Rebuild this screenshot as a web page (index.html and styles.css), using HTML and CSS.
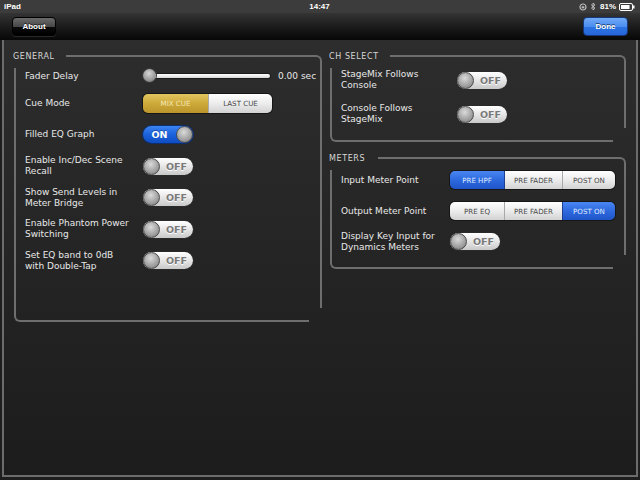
FILE: index.html
```html
<!DOCTYPE html>
<html>
<head>
<meta charset="utf-8">
<link rel="stylesheet" href="styles.css">
</head>
<body>
<div class="screen">
  <div class="status">
    <span class="st-left">iPad</span>
    <span class="st-time">14:47</span>
    <span class="st-right">
      <svg class="ico" width="8" height="8" viewBox="0 0 8 8"><circle cx="4" cy="4" r="3" fill="none" stroke="#bbb" stroke-width="1.2"/><rect x="2.7" y="3.3" width="2.6" height="2" fill="#bbb"/></svg>
      <svg class="ico" width="6" height="9" viewBox="0 0 6 9"><path d="M1 2.5 L5 6.2 L3 8 V1 L5 2.8 L1 6.5" fill="none" stroke="#bbb" stroke-width="1"/></svg>
      <span class="pct">81%</span>
      <svg class="ico" width="16" height="8" viewBox="0 0 16 8"><rect x="0.5" y="0.5" width="13" height="7" rx="1.5" fill="none" stroke="#fff" stroke-width="1"/><rect x="2" y="2" width="8.5" height="4" fill="#fff"/><rect x="14" y="2.5" width="1.5" height="3" fill="#fff"/></svg>
    </span>
  </div>
  <div class="toolbar">
    <button class="btn btn-about">About</button>
    <button class="btn btn-done">Done</button>
  </div>
  <div class="frame">
    <div class="col col-left">
      <section class="group group-general">
        <div class="group-head">GENERAL</div>
        <div class="group-body">
          <div class="row">
            <span class="label">Fader Delay</span>
            <div class="slider"><div class="track"><span class="thumb"></span></div></div>
            <span class="value">0.00 sec</span>
          </div>
          <div class="row row-cue">
            <span class="label">Cue Mode</span>
            <div class="seg seg-cue"><span class="seg-item gold">MIX CUE</span><span class="seg-item">LAST CUE</span></div>
          </div>
          <div class="row">
            <span class="label">Filled EQ Graph</span>
            <span class="switch on"><span class="sw-text">ON</span><span class="knob"></span></span>
          </div>
          <div class="row">
            <span class="label">Enable Inc/Dec Scene<br>Recall</span>
            <span class="switch off"><span class="knob"></span><span class="sw-text">OFF</span></span>
          </div>
          <div class="row">
            <span class="label">Show Send Levels in<br>Meter Bridge</span>
            <span class="switch off"><span class="knob"></span><span class="sw-text">OFF</span></span>
          </div>
          <div class="row">
            <span class="label">Enable Phantom Power<br>Switching</span>
            <span class="switch off"><span class="knob"></span><span class="sw-text">OFF</span></span>
          </div>
          <div class="row">
            <span class="label">Set EQ band to 0dB<br>with Double-Tap</span>
            <span class="switch off"><span class="knob"></span><span class="sw-text">OFF</span></span>
          </div>
        </div>
      </section>
    </div>
    <div class="col col-right">
      <section class="group group-ch">
        <div class="group-head">CH SELECT</div>
        <div class="group-body">
          <div class="row">
            <span class="label">StageMix Follows<br>Console</span>
            <span class="switch off"><span class="knob"></span><span class="sw-text">OFF</span></span>
          </div>
          <div class="row">
            <span class="label">Console Follows<br>StageMix</span>
            <span class="switch off"><span class="knob"></span><span class="sw-text">OFF</span></span>
          </div>
        </div>
      </section>
      <section class="group group-meters">
        <div class="group-head">METERS</div>
        <div class="group-body">
          <div class="row">
            <span class="label">Input Meter Point</span>
            <div class="seg seg-meter"><span class="seg-item blue s1">PRE HPF</span><span class="seg-item s2">PRE FADER</span><span class="seg-item s3">POST ON</span></div>
          </div>
          <div class="row">
            <span class="label">Output Meter Point</span>
            <div class="seg seg-meter"><span class="seg-item s1">PRE EQ</span><span class="seg-item s2">PRE FADER</span><span class="seg-item blue s3">POST ON</span></div>
          </div>
          <div class="row">
            <span class="label">Display Key Input for<br>Dynamics Meters</span>
            <span class="switch off"><span class="knob"></span><span class="sw-text">OFF</span></span>
          </div>
        </div>
      </section>
    </div>
  </div>
</div>
</body>
</html>
```
FILE: styles.css
```css
html, body {
  margin: 0;
  padding: 0;
}
body {
  width: 640px;
  height: 480px;
  overflow: hidden;
  background: #1e1e1e;
  font-family: "DejaVu Sans", sans-serif;
}
.screen {
  width: 640px;
  height: 480px;
  display: flex;
  flex-direction: column;
}

/* status bar */
.status {
  height: 13px;
  background: #3c3c3c;
  display: grid;
  grid-template-columns: 1fr auto 1fr;
  align-items: center;
  padding: 0 5px 0 4px;
  color: #fff;
  font: bold 8px/13px "Liberation Sans", sans-serif;
}
.st-right {
  justify-self: end;
  display: flex;
  align-items: center;
  gap: 3px;
}
.ico { display: block; }
.pct { margin-left: 1px; }

/* toolbar */
.toolbar {
  height: 27px;
  background: linear-gradient(#343434, #1c1c1c 50%, #070707);
  display: flex;
  justify-content: space-between;
  align-items: center;
  padding: 0 12px;
}
.btn {
  height: 19px;
  width: 44px;
  border-radius: 4px;
  font: bold 8px "Liberation Sans", sans-serif;
  color: #fff;
  border: 1px solid #000;
  padding: 0;
  text-shadow: 0 -1px 0 rgba(0,0,0,.6);
}
.btn-about {
  background: linear-gradient(#6b6b6b, #474747 50%, #0c0c0c 50%, #000);
  box-shadow: 0 1px 0 rgba(255,255,255,.12);
}
.btn-done {
  width: 45px;
  background: linear-gradient(#72aaf6, #4a8eef 50%, #2c74e4 50%, #2766d8);
  border-color: #15387a;
}

/* content frame */
.frame {
  flex: 1;
  margin: 0 2px 3px;
  border: 2px solid #6c6c6c;
  border-top: 0;
  background: linear-gradient(#2d2d2d, #1c1c1c);
  display: flex;
  gap: 7px;
  padding: 11px 0 0 9px;
}
.col {
  display: flex;
  flex-direction: column;
  gap: 11px;
}
.col-left { width: 309px; }
.col-right { width: 297px; }

/* groups */
.group { position: relative; }
.group::before {
  content: "";
  position: absolute;
  top: 4px;
  left: var(--rule-left);
  right: 0;
  bottom: 14px;
  border-top: 2px solid #6e6e6e;
  border-right: 2px solid #6e6e6e;
  border-top-right-radius: 6px;
}
.group::after {
  content: "";
  position: absolute;
  top: 17px;
  left: 1px;
  right: 13px;
  bottom: 0;
  border-left: 2px solid #6e6e6e;
  border-bottom: 2px solid #6e6e6e;
  border-bottom-left-radius: 6px;
}
.group-general { height: 271px; --rule-left: 53px; }
.group-ch { height: 91px; --rule-left: 61px; }
.group-meters { height: 116px; --rule-left: 49px; }

.group-head {
  height: 11px;
  font: 8px/11px "DejaVu Sans", sans-serif;
  letter-spacing: 0.6px;
  color: #d6d6d6;
}
.group-body {
  display: flex;
  flex-direction: column;
  padding-left: 12px;
}
.group-general .group-body { padding-top: 3px; }
.group-ch .group-body { padding-top: 7px; }
.group-meters .group-body { padding-top: 5px; }

.row {
  display: flex;
  align-items: center;
  height: 22px;
  flex: none;
}
.group-general .row + .row { margin-top: 9.5px; }
.group-general .row-cue.row { margin-top: 5px; }
.group-ch .row + .row { margin-top: 12px; }
.group-meters .row + .row { margin-top: 9px; }
.group-meters .row + .row + .row { margin-top: 8.5px; }

.label {
  font: 9px/11px "DejaVu Sans", sans-serif;
  color: #e8e8e8;
  flex: none;
}
.group-general .label { width: 118px; }
.group-ch .label { width: 116px; }
.group-meters .label { width: 109px; }

/* slider */
.slider {
  width: 127px;
  display: flex;
  align-items: center;
}
.track {
  position: relative;
  flex: 1;
  margin-left: 7px;
  height: 4px;
  border-radius: 2px;
  background: linear-gradient(#ffffff, #d8d8d8);
  box-shadow: 0 0 0 1px rgba(0,0,0,.4);
}
.thumb {
  position: absolute;
  left: -7px;
  top: -5px;
  width: 13px;
  height: 13px;
  border-radius: 50%;
  background: radial-gradient(circle at 45% 35%, #d6d6d6, #8c8c8c 70%, #6a6a6a);
  box-shadow: 0 0 0 1px #3a3a3a;
}
.value {
  margin-left: 8px;
  font: 9px "DejaVu Sans", sans-serif;
  color: #e8e8e8;
}

/* segmented controls */
.seg {
  display: flex;
  height: 19px;
  border-radius: 5px;
  overflow: hidden;
  box-shadow: 0 0 0 1px #161616;
}
.seg-cue { width: 129px; }
.seg-meter { width: 165px; height: 18px; }
.seg-item {
  flex: 1;
  display: flex;
  align-items: center;
  justify-content: center;
  font: 7.1px "DejaVu Sans", sans-serif;
  color: #4a4a4a;
  background: linear-gradient(#ffffff, #ececec 50%, #d2d2d2);
}
.seg-item + .seg-item { border-left: 1px solid #a9a9a9; }
.seg-cue .seg-item:first-child { flex: 0 0 65px; }
.seg-meter .s1 { flex: 0 0 54px; }
.seg-meter .s2 { flex: 0 0 57px; }
.seg-item.gold {
  color: #f5e7b4;
  background: linear-gradient(#e0c560, #cda93a 50%, #b9952c);
}
.seg-item.blue {
  color: #dfe9ff;
  background: linear-gradient(#4a86f2, #2e69de 50%, #1e55c9);
}
.seg-item.blue + .seg-item, .seg-item + .seg-item.blue { border-left-color: #1e3f90; }

/* switches */
.switch {
  display: flex;
  align-items: center;
  width: 50px;
  height: 17px;
  border-radius: 9px;
  box-sizing: border-box;
  flex: none;
}
.switch.off {
  background: linear-gradient(#ffffff, #e6e6e6 50%, #c8c8c8);
  box-shadow: 0 0 0 1px #2a2a2a;
}
.switch.on {
  background: linear-gradient(#3c84f3, #1c62dc 50%, #0f4cc2);
  box-shadow: 0 0 0 1px #0c2f70;
}
.knob {
  width: 17px;
  height: 17px;
  border-radius: 50%;
  box-sizing: border-box;
  flex: none;
  background: radial-gradient(circle at 45% 35%, #dadada, #9a9a9a 65%, #777);
  border: 1px solid #4a4a4a;
}
.sw-text {
  flex: 1;
  text-align: center;
  font: bold 9.5px "DejaVu Sans", sans-serif;
}
.switch.off .sw-text {
  color: #7a7a7a;
  text-shadow: 0 1px 0 #fff;
}
.switch.on .sw-text {
  color: #fff;
  text-shadow: 0 -1px 0 rgba(0,0,0,.3);
}
```
